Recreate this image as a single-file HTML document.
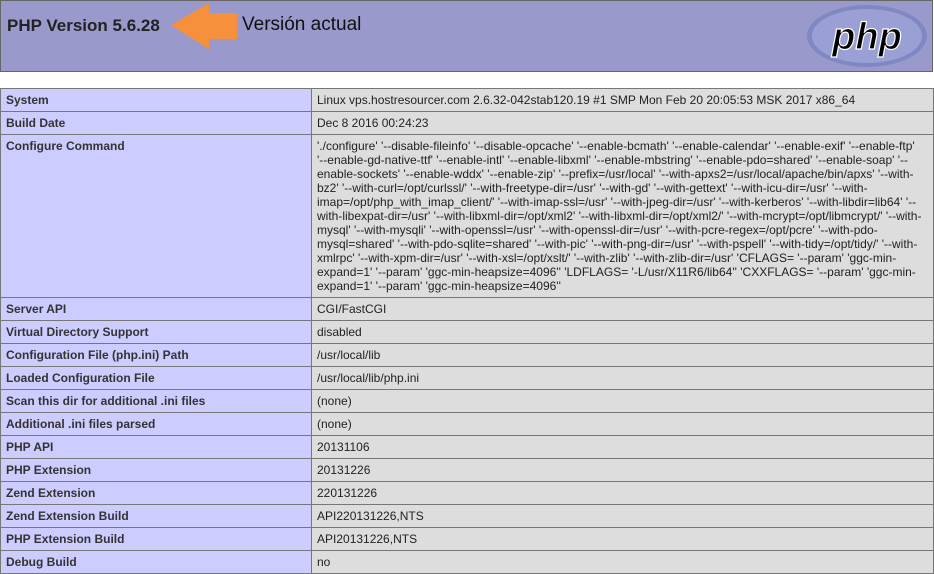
<!DOCTYPE html>
<html><head><meta charset="utf-8"><style>
body{margin:0;background:#fff;font-family:"Liberation Sans",Arial,sans-serif;width:934px;height:574px;overflow:hidden;position:relative}
.hdr{position:absolute;left:0;top:0;width:931px;height:70px;background:#9999cc;border:1px solid #666;}
.t1{position:absolute;left:6px;top:15px;font-size:17px;font-weight:bold;color:#222}
.t2{position:absolute;left:241px;top:13px;font-size:19px;color:#111}
table{position:absolute;left:0;top:88px;width:934px;border-collapse:collapse;font-size:12px;color:#222;table-layout:fixed}
td{border:1px solid #777;padding:0 5px;height:22px;vertical-align:middle}
td.e{background:#ccccff;font-weight:bold;color:#333}
td.v{background:#dddddd}
td.cc{vertical-align:top;padding-top:4px;line-height:14px;white-space:nowrap;font-size:12px;overflow:hidden}
</style></head><body>
<div class="hdr">
<div class="t1">PHP Version 5.6.28</div>
<svg style="position:absolute;left:168px;top:2px" width="70" height="48"><polygon points="2,22 40,0 40,10 68,10 68,36 40,36 40,46" fill="#f7903c"/></svg>
<div class="t2">Versión actual</div>
<svg style="position:absolute;left:804px;top:3px" width="124" height="64"><ellipse cx="62" cy="32" rx="60" ry="31" fill="#8088c4"/><ellipse cx="62" cy="32" rx="55" ry="27" fill="#9aa0d4"/><text x="62" y="45" text-anchor="middle" font-family="Liberation Sans" font-style="italic" font-weight="bold" font-size="38" fill="#000" stroke="#fff" stroke-width="1.2">php</text></svg>
</div>
<table>
<colgroup><col style="width:311px"><col></colgroup>
<tr><td class="e">System</td><td class="v">Linux vps.hostresourcer.com 2.6.32-042stab120.19 #1 SMP Mon Feb 20 20:05:53 MSK 2017 x86_64</td></tr>
<tr><td class="e">Build Date</td><td class="v">Dec 8 2016 00:24:23</td></tr>
<tr><td class="e" style="vertical-align:top;padding-top:4px;height:158px">Configure Command</td><td class="v cc">'./configure' '--disable-fileinfo' '--disable-opcache' '--enable-bcmath' '--enable-calendar' '--enable-exif' '--enable-ftp'<br>'--enable-gd-native-ttf' '--enable-intl' '--enable-libxml' '--enable-mbstring' '--enable-pdo=shared' '--enable-soap' '--<br>enable-sockets' '--enable-wddx' '--enable-zip' '--prefix=/usr/local' '--with-apxs2=/usr/local/apache/bin/apxs' '--with-<br>bz2' '--with-curl=/opt/curlssl/' '--with-freetype-dir=/usr' '--with-gd' '--with-gettext' '--with-icu-dir=/usr' '--with-<br>imap=/opt/php_with_imap_client/' '--with-imap-ssl=/usr' '--with-jpeg-dir=/usr' '--with-kerberos' '--with-libdir=lib64' '--<br>with-libexpat-dir=/usr' '--with-libxml-dir=/opt/xml2' '--with-libxml-dir=/opt/xml2/' '--with-mcrypt=/opt/libmcrypt/' '--with-<br>mysql' '--with-mysqli' '--with-openssl=/usr' '--with-openssl-dir=/usr' '--with-pcre-regex=/opt/pcre' '--with-pdo-<br>mysql=shared' '--with-pdo-sqlite=shared' '--with-pic' '--with-png-dir=/usr' '--with-pspell' '--with-tidy=/opt/tidy/' '--with-<br>xmlrpc' '--with-xpm-dir=/usr' '--with-xsl=/opt/xslt/' '--with-zlib' '--with-zlib-dir=/usr' 'CFLAGS= '--param' 'ggc-min-<br>expand=1' '--param' 'ggc-min-heapsize=4096'' 'LDFLAGS= '-L/usr/X11R6/lib64'' 'CXXFLAGS= '--param' 'ggc-min-<br>expand=1' '--param' 'ggc-min-heapsize=4096''</td></tr>
<tr><td class="e">Server API</td><td class="v">CGI/FastCGI</td></tr>
<tr><td class="e">Virtual Directory Support</td><td class="v">disabled</td></tr>
<tr><td class="e">Configuration File (php.ini) Path</td><td class="v">/usr/local/lib</td></tr>
<tr><td class="e">Loaded Configuration File</td><td class="v">/usr/local/lib/php.ini</td></tr>
<tr><td class="e">Scan this dir for additional .ini files</td><td class="v">(none)</td></tr>
<tr><td class="e">Additional .ini files parsed</td><td class="v">(none)</td></tr>
<tr><td class="e">PHP API</td><td class="v">20131106</td></tr>
<tr><td class="e">PHP Extension</td><td class="v">20131226</td></tr>
<tr><td class="e">Zend Extension</td><td class="v">220131226</td></tr>
<tr><td class="e">Zend Extension Build</td><td class="v">API220131226,NTS</td></tr>
<tr><td class="e">PHP Extension Build</td><td class="v">API20131226,NTS</td></tr>
<tr><td class="e">Debug Build</td><td class="v">no</td></tr>
</table>
</body></html>
